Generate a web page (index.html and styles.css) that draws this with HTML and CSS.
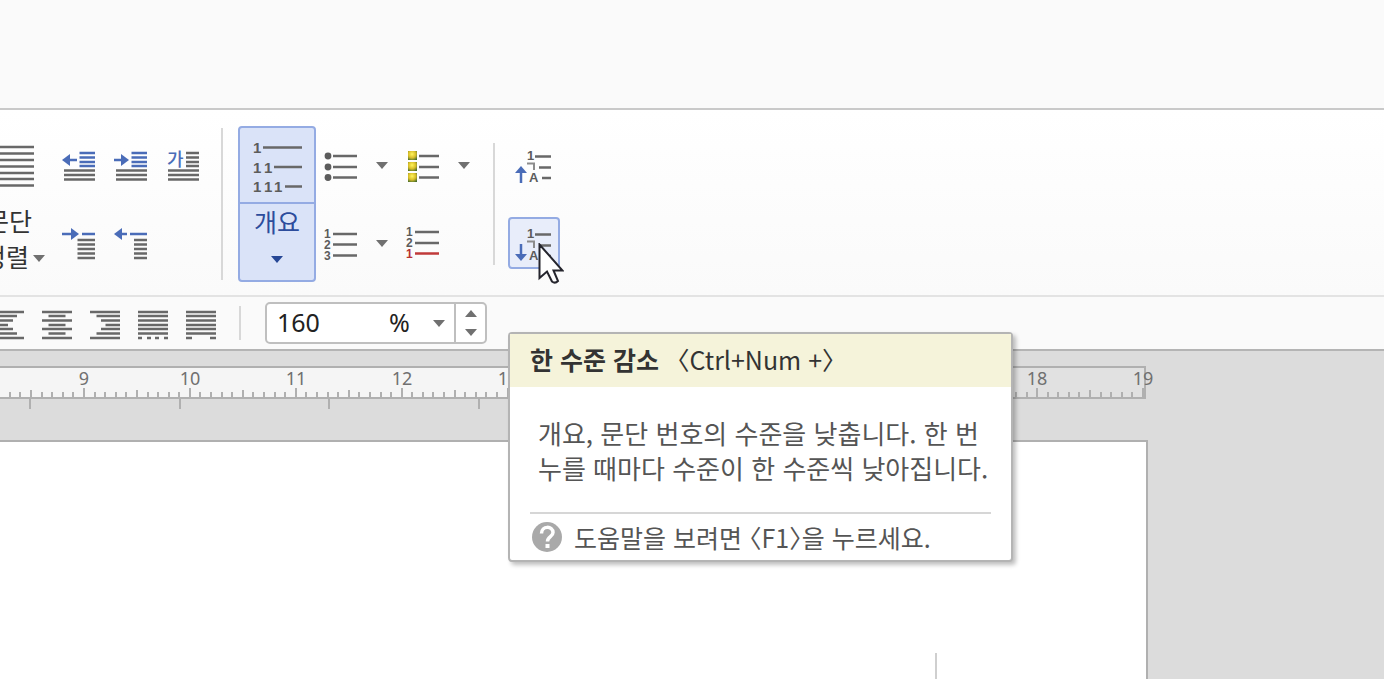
FILE: index.html
```html
<!DOCTYPE html>
<html lang="ko">
<head>
<meta charset="utf-8">
<title>문서 편집기</title>
<link rel="stylesheet" href="styles.css">
</head>
<body>
<header class="title-area"></header>

<div class="ribbon" role="toolbar" aria-label="문단">
  <button class="para-align" type="button">
    <svg class="icon" width="48" height="42" viewBox="0 0 48 42"><path class="ink" d="M0 2H48M0 8.500H48M0 15H48M0 21.500H48M0 28H48M0 34H48M0 40.500H48"/></svg>
    <span class="para-label">문단</span>
    <span class="para-label">정렬<svg class="caret" width="12" height="7" viewBox="0 0 12 7"><path d="M0 0H12L6 7Z"/></svg></span>
  </button>

  <div class="indent-grid">
    <button class="tool" type="button" aria-label="왼쪽 여백 줄이기"><svg class="icon" width="34" height="32" viewBox="0 0 34 32"><path class="blue" d="M17.500 3H33M17.500 7.500H33M17.500 12H33M17.500 16H33M8 10H15"/><path class="blue-fill" d="M0 10L8 4V16Z"/><path class="ink" d="M2 20.500H33M2 25H33M2 29.500H33"/></svg></button>
    <button class="tool" type="button" aria-label="왼쪽 여백 늘리기"><svg class="icon" width="34" height="32" viewBox="0 0 34 32"><path class="blue" d="M17.500 3H33M17.500 7.500H33M17.500 12H33M17.500 16H33M0 10H8"/><path class="blue-fill" d="M15 10L7 4V16Z"/><path class="ink" d="M2 20.500H33M2 25H33M2 29.500H33"/></svg></button>
    <button class="tool" type="button" aria-label="첫 글자 장식"><svg class="icon" width="34" height="32" viewBox="0 0 34 32"><text class="ga" x="1" y="16">가</text><path class="ink" d="M20 3H33M20 7.500H33M20 12H33M20 16H33M2 20.500H33M2 25H33M2 29.500H33"/></svg></button>
    <button class="tool" type="button" aria-label="첫 줄 들여쓰기"><svg class="icon" width="34" height="32" viewBox="0 0 34 32"><path class="blue" d="M0 6H9M20 6H33"/><path class="blue-fill" d="M17 6L9 0V12Z"/><path class="ink" d="M15.500 12H33M15.500 16.500H33M15.500 21H33M15.500 25.500H33M15.500 30H33"/></svg></button>
    <button class="tool" type="button" aria-label="첫 줄 내어쓰기"><svg class="icon" width="34" height="32" viewBox="0 0 34 32"><path class="blue" d="M8 6H13M16 6H33"/><path class="blue-fill" d="M0 6L8 0V12Z"/><path class="ink" d="M20 12H33M20 16.500H33M20 21H33M20 25.500H33M20 30H33"/></svg></button>
  </div>

  <span class="rule rule-tall"></span>

  <div class="outline">
    <button class="outline-main" type="button" aria-label="개요 적용"><svg class="icon" width="50" height="52" viewBox="0 0 50 52"><g class="numeral n15"><text x="1" y="12">1</text><text x="1" y="32">1</text><text x="12" y="32">1</text><text x="1" y="51">1</text><text x="12" y="51">1</text><text x="22" y="51">1</text></g><path class="ink" d="M11 6.500H50M22 26H50M33 45.500H50"/></svg></button>
    <button class="outline-menu" type="button">개요<svg class="caret caret-blue" width="12" height="7" viewBox="0 0 12 7"><path d="M0 0H12L6 7Z"/></svg></button>
  </div>

  <div class="list-grid">
    <button class="tool" type="button" aria-label="글머리표"><svg class="icon" width="34" height="32" viewBox="0 0 34 32"><circle cx="4" cy="6" r="3.400"/><circle cx="4" cy="17" r="3.400"/><circle cx="4" cy="27.500" r="3.400"/><path class="ink" d="M9 6H33M9 17H33M9 27.500H33"/></svg></button>
    <button class="tool" type="button" aria-label="글머리표 목록"><svg class="caret" width="12" height="7" viewBox="0 0 12 7"><path d="M0 0H12L6 7Z"/></svg></button>
    <button class="tool" type="button" aria-label="그림 글머리표"><svg class="icon" width="34" height="32" viewBox="0 0 34 32"><defs><radialGradient id="gold" cx=".45" cy=".35" r=".75"><stop offset="0" stop-color="#fff65c"/><stop offset=".55" stop-color="#d8bd28"/><stop offset="1" stop-color="#456c2b"/></radialGradient></defs><g fill="url(#gold)"><rect x="2" y="1" width="9" height="9"/><rect x="2" y="12" width="9" height="9"/><rect x="2" y="23" width="9" height="9"/></g><path class="ink" d="M13 6H33M13 17H33M13 27.500H33"/></svg></button>
    <button class="tool" type="button" aria-label="그림 글머리표 목록"><svg class="caret" width="12" height="7" viewBox="0 0 12 7"><path d="M0 0H12L6 7Z"/></svg></button>
    <button class="tool" type="button" aria-label="문단 번호"><svg class="icon" width="34" height="34" viewBox="0 0 34 34"><g class="numeral n12"><text x="0" y="11">1</text><text x="0" y="22">2</text><text x="0" y="33">3</text></g><path class="ink" d="M9 7H33M9 17.500H33M9 28.500H33"/></svg></button>
    <button class="tool" type="button" aria-label="문단 번호 목록"><svg class="caret" width="12" height="7" viewBox="0 0 12 7"><path d="M0 0H12L6 7Z"/></svg></button>
    <button class="tool" type="button" aria-label="새 번호로 시작"><svg class="icon" width="34" height="34" viewBox="0 0 34 34"><g class="numeral n12"><text x="0" y="9">1</text><text x="0" y="20">2</text><text class="red-fill" x="0" y="31">1</text></g><path class="ink" d="M9 5H33M9 16H33"/><path class="red" d="M9 26.500H33"/></svg></button>
  </div>

  <span class="rule rule-short"></span>

  <div class="level-grid">
    <button class="tool" type="button" aria-label="한 수준 증가"><svg class="icon" width="38" height="36" viewBox="0 0 38 36"><g class="numeral n13"><text x="12" y="12">1</text><text x="14" y="34">A</text></g><path class="gray" d="M12 15.500H19V22"/><path class="ink" d="M20 8.500H36M24 19.500H36M27 30H36"/><path class="blue" d="M6 24V35"/><path class="blue-fill" d="M6 18L0 25H12Z"/></svg></button>
    <div class="level-down">
      <button class="tool tool-hot" type="button" aria-describedby="tip" aria-label="한 수준 감소"><svg class="icon" width="38" height="36" viewBox="0 0 38 36"><g class="numeral n13"><text x="12" y="12">1</text><text x="14" y="34">A</text></g><path class="gray" d="M12 15.500H19V22"/><path class="ink" d="M20 8.500H36M24 19.500H36M27 30H36"/><path class="blue" d="M6 18V29"/><path class="blue-fill" d="M6 35L0 28H12Z"/></svg></button>
      <svg class="pointer" width="26" height="42" viewBox="0 0 26 42"><path d="M1.500 1.500V35L9 28.500L14 38.500Q17 41 20 38L15.500 27.500H24.500Z"/></svg>
      <div class="tip" id="tip" role="tooltip">
        <div class="tip-head"><strong>한 수준 감소</strong><span class="tip-key">〈Ctrl+Num +〉</span></div>
        <p class="tip-body">개요, 문단 번호의 수준을 낮춥니다. 한 번<br>누를 때마다 수준이 한 수준씩 낮아집니다.</p>
        <div class="tip-foot"><svg width="30" height="30" viewBox="0 0 30 30"><circle cx="15" cy="15" r="15" fill="#a9a9a9"/><path d="M9.500 11.500C9.500 3.500 21 3.500 21 10.500C21 15 15.500 14.500 15.500 19.500" fill="none" stroke="#fff" stroke-width="3.500"/><rect x="13.500" y="22" width="4" height="4" fill="#fff"/></svg><span>도움말을 보려면 〈F1〉을 누르세요.</span></div>
      </div>
    </div>
  </div>
</div>

<div class="format-bar" role="toolbar" aria-label="정렬과 줄 간격">
  <button class="align align-first" type="button" aria-label="왼쪽 정렬"><svg class="icon" width="30" height="30" viewBox="0 0 30 30"><path class="ink" d="M0 2H30M0 6H23M0 10.500H19M0 15H14M0 19H19M0 23.500H23M0 28H30"/></svg></button>
  <button class="align" type="button" aria-label="가운데 정렬"><svg class="icon" width="30" height="30" viewBox="0 0 30 30"><path class="ink" d="M0 2H30M6.500 6H23.500M0 10.500H30M6.500 15H23.500M0 19H30M6.500 23.500H23.500M0 28H30"/></svg></button>
  <button class="align" type="button" aria-label="오른쪽 정렬"><svg class="icon" width="30" height="30" viewBox="0 0 30 30"><path class="ink" d="M0 2H30M6.500 6H30M11 10.500H30M15.500 15H30M11 19H30M6.500 23.500H30M0 28H30"/></svg></button>
  <button class="align" type="button" aria-label="배분 정렬"><svg class="icon" width="30" height="30" viewBox="0 0 30 30"><path class="ink" d="M0 2H30M0 6H30M0 10.500H30M0 15H30M0 19H30M0 23.500H30M0 28H4M9 28H13M17 28H21M26 28H30"/></svg></button>
  <button class="align" type="button" aria-label="나눔 정렬"><svg class="icon" width="30" height="30" viewBox="0 0 30 30"><path class="ink" d="M0 2H30M0 6H30M0 10.500H30M0 15H30M0 19H30M0 23.500H30M0 28H6M24 28H30"/></svg></button>
  <span class="rule rule-bar"></span>
  <div class="spacing">
    <input class="spacing-value" type="text" value="160" aria-label="줄 간격">
    <span class="spacing-unit">%</span>
    <button class="spacing-open" type="button" aria-label="줄 간격 목록"><svg class="caret" width="12" height="7" viewBox="0 0 12 7"><path d="M0 0H12L6 7Z"/></svg></button>
    <span class="spin">
      <button type="button" aria-label="늘리기"><svg class="caret" width="12" height="7" viewBox="0 0 12 7"><path d="M0 7H12L6 0Z"/></svg></button>
      <button type="button" aria-label="줄이기"><svg class="caret" width="12" height="7" viewBox="0 0 12 7"><path d="M0 0H12L6 7Z"/></svg></button>
    </span>
  </div>
</div>

<main class="workspace">
  <svg class="ruler" id="ruler" height="46" aria-label="눈금자">
    <rect x="-2" y="1" width="1147" height="31" fill="#e1e1e1"/>
    <rect x="-2" y="1" width="939" height="31" fill="#f5f5f5"/>
    <path class="ruler-line" d="M0 1H1145V32H0"/>
  </svg>
  <div class="page"><span class="margin-mark"></span></div>
</main>
<script src="ruler.js"></script>
</body>
</html>
```

FILE: styles.css
```css
* { box-sizing: border-box; }

body {
  margin: 0;
  min-height: 100vh;
  display: flex;
  flex-direction: column;
  overflow: hidden;
  background: #fafafa;
  color: #333;
  font-family: "Noto Sans CJK KR", sans-serif;
  font-size: 26px;
}

button {
  display: flex;
  align-items: center;
  justify-content: center;
  margin: 0;
  padding: 0;
  border: 0;
  background: none;
  color: inherit;
  font: inherit;
}

svg { display: block; flex: none; }

.icon { fill: #5c5c5c; overflow: visible; }
.icon .ink { fill: none; stroke: #686868; stroke-width: 2.500; }
.icon .gray { fill: none; stroke: #8c8c8c; stroke-width: 2; }
.icon .blue { fill: none; stroke: #4a6cb8; stroke-width: 2.500; }
.icon .red { fill: none; stroke: #c03a3a; stroke-width: 2.500; }
.blue-fill { fill: #4a6cb8; }
.red-fill { fill: #b83232; }
.ga { fill: #4a6cb8; font-size: 18px; font-weight: 500; }
.numeral { font-family: "Liberation Sans", sans-serif; font-weight: 700; }
.n12 { font-size: 12px; }
.n13 { font-size: 13px; }
.n15 { font-size: 15px; }

.caret { fill: #707070; }
.caret-blue { fill: #264796; }

.title-area { height: 110px; border-bottom: 2px solid #c9c9c9; }

.ribbon {
  display: flex;
  align-items: center;
  padding: 16px 0 13px;
  border-bottom: 2px solid #e3e3e3;
  background: linear-gradient(#fff, #fafafa);
}

.para-align {
  width: 46px;
  height: 130px;
  flex-direction: column;
  align-items: flex-end;
  justify-content: flex-start;
  padding: 6px 0 0;
  overflow: hidden;
}
.para-align .icon { margin: 0 12px 15px 0; }
.para-label {
  display: flex;
  align-items: center;
  line-height: 36px;
  font-size: 25px;
  white-space: nowrap;
  margin-right: 14px;
}
.para-label:last-child { margin-right: 1px; }
.para-label .caret { margin: 4px 0 0 4px; }

.indent-grid, .list-grid, .level-grid { display: grid; grid-auto-rows: 52px; row-gap: 26px; }
.indent-grid { grid-template-columns: repeat(3, 52px); margin: 0 12px 0 7px; }
.list-grid { grid-template-columns: 50px 32px 50px 32px; margin-right: 13px; }
.level-grid { grid-template-columns: 52px; margin-left: 13px; }

.tool { width: 100%; height: 52px; padding-top: 1px; }
.tool-hot { border: 2px solid #94abe3; border-radius: 4px; background: #e8edfa; }

.rule { width: 2px; background: #d8d8d8; }
.rule-tall { height: 152px; margin-right: 15px; }
.rule-short { height: 122px; }

.outline {
  width: 78px;
  height: 156px;
  display: flex;
  flex-direction: column;
  border: 2px solid #94abe3;
  border-radius: 4px;
  background: #dae3f8;
}
.outline-main { height: 76px; padding-top: 4px; border-bottom: 2px solid #94abe3; }
.outline-menu { flex: 1; flex-direction: column; justify-content: flex-start; line-height: 34px; font-size: 25px; color: #2c4c9c; }
.outline-menu .caret { margin-top: 18px; }

.level-down { position: relative; }

.pointer { position: absolute; left: 30px; top: 26px; fill: #fff; stroke: #25252d; stroke-width: 2; }

.tip {
  position: absolute;
  z-index: 2;
  left: 0;
  top: 115px;
  width: 505px;
  border: 2px solid #b4b4b4;
  border-radius: 4px;
  background: #fff;
  box-shadow: 3px 3px 4px rgba(0, 0, 0, .25);
  color: #555;
  white-space: nowrap;
  font-feature-settings: "halt";
}
.tip-head { display: flex; gap: 18px; padding: 0 20px 3px; line-height: 50px; background: #f5f3da; color: #333; font-size: 25px; }
.tip-body { margin: 28px 28px 27px; line-height: 35px; }
.tip-foot { display: flex; align-items: center; gap: 12px; margin: 0 20px; padding-left: 2px; border-top: 2px solid #d6d6d6; line-height: 46px; font-size: 25px; }

.format-bar { display: flex; align-items: center; padding: 5px 0; border-bottom: 2px solid #b4b4b4; }
.align { width: 48px; height: 42px; padding-top: 3px; }
.align-first { width: 33px; justify-content: flex-end; padding-right: 9px; overflow: hidden; }
.rule-bar { height: 34px; margin: 0 24px 0 14px; }

.spacing {
  display: flex;
  width: 222px;
  height: 42px;
  border: 2px solid #bfbfbf;
  border-radius: 5px;
  background: #fff;
  color: #222;
  font-family: "Noto Sans", sans-serif;
  font-size: 25px;
  line-height: 36px;
}
.spacing-value { flex: 1; min-width: 0; padding: 0 0 2px 10px; border: 0; background: none; color: inherit; font: inherit; outline: 0; }
.spacing-unit { width: 34px; }
.spacing-open { width: 31px; }
.spin { display: flex; flex-direction: column; width: 31px; border-left: 2px solid #bfbfbf; }
.spin button { flex: 1; }

.workspace { flex: 1; display: flex; flex-direction: column; padding-top: 15px; background: #dcdcdc; }

.ruler { width: 100%; }
.ruler-line { fill: none; stroke: #b0b0b0; stroke-width: 2; }
.ruler-label { fill: #707070; font-family: "Noto Sans", sans-serif; font-size: 18px; text-anchor: middle; }

.page {
  flex: 1;
  width: calc(100% - 236px);
  margin-top: 28px;
  display: flex;
  align-items: flex-end;
  justify-content: flex-end;
  border: solid #b0b0b0;
  border-width: 2px 2px 0 0;
  background: #fff;
}
.margin-mark { width: 2px; height: 26px; margin-right: 209px; background: #cfcfcf; }
```

FILE: ruler.js
```js
const svg = document.getElementById("ruler");
const NS = "http://www.w3.org/2000/svg";
const CM = 105.9;
const ORIGIN = 84 - 9 * CM;

for (let mm = 82; mm <= 190; mm++) {
  const x = Math.round(ORIGIN + mm * CM / 10);
  const length = mm % 10 === 0 ? 9 : mm % 5 === 0 ? 7 : 5;
  const tick = document.createElementNS(NS, "path");
  tick.setAttribute("class", "ruler-line");
  tick.setAttribute("d", `M${x} ${31 - length}V31`);
  svg.append(tick);
  if (mm % 10 === 0) {
    const label = document.createElementNS(NS, "text");
    label.setAttribute("class", "ruler-label");
    label.setAttribute("x", x);
    label.setAttribute("y", 19);
    label.textContent = mm / 10;
    svg.append(label);
  }
}

for (let x = 30; x < 1000; x += 149.6) {
  const stop = document.createElementNS(NS, "path");
  stop.setAttribute("class", "ruler-line");
  stop.setAttribute("d", `M${Math.round(x)} 33V43`);
  svg.append(stop);
}
```
